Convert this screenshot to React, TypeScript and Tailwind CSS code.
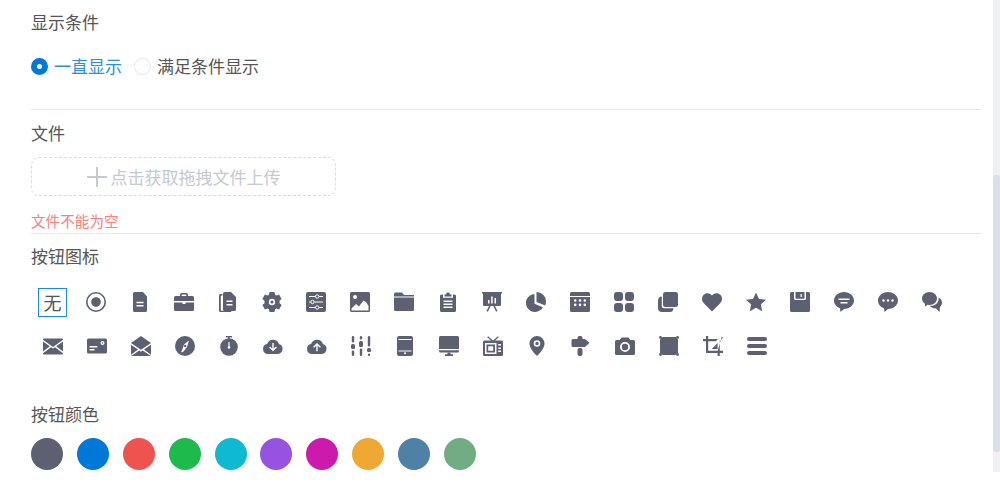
import type { ReactNode } from "react";

const Svg = ({ children }: { children: ReactNode }) => (
  <svg viewBox="0 0 20 20" className="h-5 w-5 fill-[#5c6070]" aria-hidden>
    {children}
  </svg>
);

const W = "#ffffff";

const topIcons: ReactNode[] = [
  <>
    <path fillRule="evenodd" d="M10 0a10 10 0 1 1 0 20 10 10 0 0 1 0-20Zm0 1.600a8.400 8.400 0 1 0 0 16.800 8.400 8.400 0 0 0 0-16.800Z" />
    <circle cx="10" cy="10" r="4.800" />
  </>,
  <>
    <path d="M3 1.500A1.500 1.500 0 0 1 4.500 0H13l4 4.500v14a1.500 1.500 0 0 1-1.500 1.500h-11A1.500 1.500 0 0 1 3 18.500Z" />
    <path fill={W} d="M6.500 9.800h7v1.500h-7ZM6.500 13h7v1.500h-7Z" />
  </>,
  <>
    <path d="M6 4V2.500A1.500 1.500 0 0 1 7.500 1h5A1.500 1.500 0 0 1 14 2.500V4h4.500A1.500 1.500 0 0 1 20 5.500V9H0V5.500A1.500 1.500 0 0 1 1.500 4Zm1.600 0h4.800V2.600H7.600ZM0 10.500h8.500V12h3v-1.500H20v7a1.500 1.500 0 0 1-1.500 1.500h-17A1.500 1.500 0 0 1 0 17.500Z" />
  </>,
  <>
    <path d="M4.500 2v1.500H3.600a.8.800 0 0 0-.8.800V18c0 .4.300.7.700.7h9.700V20H2.500A1.500 1.500 0 0 1 1 18.500v-15A1.500 1.500 0 0 1 2.500 2Z" />
    <path fillRule="evenodd" d="M6.500 0H13l5 5v12.500a1.500 1.500 0 0 1-1.500 1.500h-10A1.500 1.500 0 0 1 5 17.500v-16A1.500 1.500 0 0 1 6.500 0Zm2 8.500V10h6V8.500Zm0 3.500v1.500h6V12Z" />
  </>,
  <>
    <path
      fillRule="evenodd"
      d="M7.500 0h5l.6 2.800 1.300.7 2.700-.9 2.500 4.300-2.100 1.900v2.400l2.100 1.900-2.500 4.300-2.700-.9-1.300.7-.6 2.800h-5l-.6-2.800-1.300-.7-2.700.9-2.500-4.300L2.500 11.200V8.800L.4 6.900l2.500-4.300 2.700.9 1.300-.7ZM10 6.800a3.200 3.200 0 1 0 0 6.400 3.200 3.200 0 0 0 0-6.400Zm0 1.700a1.500 1.500 0 1 1 0 3 1.500 1.500 0 0 1 0-3Z"
    />
  </>,
  <>
    <rect width="20" height="20" rx="2" />
    <path fill={W} d="M3 4h6.500v1H3ZM13 4h4v1h-4ZM3 9.500h1.500v1H3ZM8.500 9.500H17v1H8.500ZM3 15h6.500v1H3ZM13 15h4v1h-4Z" />
    <circle cx="11.200" cy="4.500" r="1.700" fill="none" stroke={W} />
    <circle cx="6.500" cy="10" r="1.700" fill="none" stroke={W} />
    <circle cx="11.200" cy="15.500" r="1.700" fill="none" stroke={W} />
  </>,
  <>
    <rect width="20" height="20" rx="1.500" />
    <circle cx="5" cy="5" r="2" fill={W} />
    <path fill={W} d="M1.500 18.500v-2l4.500-4.500 3 2.500 4.500-6 2.500 1.500 2.500 4v4.500Z" />
  </>,
  <>
    <path d="M0 2a1.500 1.500 0 0 1 1.500-1.500H8L10 3H20v1.500H0ZM0 5.500h20v12a1.500 1.500 0 0 1-1.500 1.500h-17A1.500 1.500 0 0 1 0 17.500Z" />
  </>,
  <>
    <path d="M6.500 2.500H8A2 2 0 0 1 12 2.500h1.500v2h-7Z" />
    <path fillRule="evenodd" d="M5 2.500v3.200h10V2.500h1.500A1.500 1.500 0 0 1 18 4v14.500a1.500 1.500 0 0 1-1.500 1.500h-13A1.500 1.500 0 0 1 2 18.500V4a1.500 1.500 0 0 1 1.500-1.500ZM5.500 8.500V10h9V8.500Zm0 3V13h9v-1.500Zm0 3V16h9v-1.500Z" />
  </>,
  <>
    <path d="M0 0h20v1.500h-1V13a1 1 0 0 1-1 1h-5l2.500 5-1.400.7L11.300 14H8.700l-2.800 5.700L4.500 19 7 14H2a1 1 0 0 1-1-1V1.500H0Z" />
    <path fill={W} d="M6 8h1.500v3.500H6ZM9.200 4.500h1.500v7H9.200ZM12.500 6h1.500v5.500h-1.500Z" />
  </>,
  <>
    <path d="M8.500 2v9.800l8.400 3.400A9 9 0 1 1 8.500 2Z" />
    <path d="M10.500 0a9.500 9.500 0 0 1 9.500 9.500c0 1.400-.3 2.800-.8 4l-8.700-3.500Z" />
  </>,
  <>
    <path d="M1.500 0h17A1.500 1.500 0 0 1 20 1.500V4H0V1.500A1.500 1.500 0 0 1 1.500 0Z" />
    <path fillRule="evenodd" d="M0 5h20v13.500a1.500 1.500 0 0 1-1.500 1.500h-17A1.500 1.500 0 0 1 0 18.500Zm5.200 2.200a1.300 1.300 0 1 0 0 2.600 1.300 1.300 0 0 0 0-2.600Zm4.800 0a1.300 1.300 0 1 0 0 2.600 1.300 1.300 0 0 0 0-2.600Zm4.800 0a1.300 1.300 0 1 0 0 2.600 1.300 1.300 0 0 0 0-2.600ZM5.200 11.600a1.300 1.300 0 1 0 0 2.600 1.300 1.300 0 0 0 0-2.600Zm4.800 0a1.300 1.300 0 1 0 0 2.600 1.300 1.300 0 0 0 0-2.600Zm4.800 0a1.300 1.300 0 1 0 0 2.600 1.300 1.300 0 0 0 0-2.600Z" />
  </>,
  <>
    <rect width="9" height="9" rx="3" />
    <rect x="11" width="9" height="9" rx="3" />
    <rect y="11" width="9" height="9" rx="3" />
    <rect x="11" y="11" width="9" height="9" rx="3" />
  </>,
  <>
    <rect x="5" width="15" height="15" rx="2.500" />
    <path d="M3.800 4.500v9.700a2 2 0 0 0 2 2h9.700A4 4 0 0 1 12 20H4a4 4 0 0 1-4-4V8a4 4 0 0 1 3.800-3.500Z" />
  </>,
  <path d="M10 19.500 2 11.500C-.5 9-.6 5.200 1.500 3 3.800.7 7.500.8 10 3.500 12.500.8 16.200.7 18.500 3c2.100 2.200 2 6-.5 8.500Z" />,
  <path d="m10 .5 3 6.400 7 .8-5.200 4.700 1.400 6.900-6.200-3.500-6.200 3.500 1.400-6.900L0 7.700l7-.8Z" />,
  <>
    <path fillRule="evenodd" d="M1.500 0H4v6.500A1.500 1.500 0 0 0 5.500 8h9A1.500 1.500 0 0 0 16 6.500V0h2.500A1.500 1.500 0 0 1 20 1.500v17a1.500 1.500 0 0 1-1.500 1.500h-17A1.500 1.500 0 0 1 0 18.500v-17A1.500 1.500 0 0 1 1.500 0Z" />
    <path fillRule="evenodd" d="M5.500 0h9v6a.8.800 0 0 1-.8.800H6.300A.8.800 0 0 1 5.500 6Zm5 2v3h1.300V2Z" />
  </>,
  <>
    <path d="M10 0c5.500 0 10 3.700 10 8.500S15.500 17 10 17l-3.500 3-.5-3.700C2.400 15 0 12 0 8.500 0 3.700 4.500 0 10 0Z" />
    <path fill={W} d="M4.500 6.500h11V8h-11ZM6.500 10h7v1.500h-7Z" />
  </>,
  <>
    <path d="M10 0c5.500 0 10 3.700 10 8.500S15.500 17 10 17l-3.500 3-.5-3.700C2.400 15 0 12 0 8.500 0 3.700 4.500 0 10 0Z" />
    <circle cx="5.500" cy="8.500" r="1.200" fill={W} />
    <circle cx="10" cy="8.500" r="1.200" fill={W} />
    <circle cx="14.500" cy="8.500" r="1.200" fill={W} />
  </>,
  <>
    <path d="M7.500 0C11.600 0 15 2.900 15 6.500S11.600 13 7.500 13c-.7 0-1.300 0-2-.2L3 14.800v-3.100C1.200 10.500 0 8.600 0 6.500 0 2.900 3.400 0 7.500 0Z" />
    <path d="M16.500 5.500c2.100 1 3.500 2.900 3.500 5 0 1.800-1 3.400-2 4.500l-.5 5-3.500-3.500c-2.700 0-5-1-6.300-2.700 5.300.6 9.600-3 8.800-8.300Z" />
  </>,
];

const bottomIcons: ReactNode[] = [
  <path d="M0 3.500A1 1 0 0 1 1 2.500h18a1 1 0 0 1 1 1v.3L10 11 0 3.800Zm0 2L6.800 10.300 0 15.500Zm20 0v10l-6.800-5.200ZM8 11.200l2 1.400 2-1.400 8 6.100v.2a1 1 0 0 1-1 1H1a1 1 0 0 1-1-1v-.2Z" />,
  <path
    fillRule="evenodd"
    d="M1.500 2.500h17A1.500 1.500 0 0 1 20 4v12a1.500 1.500 0 0 1-1.500 1.500h-17A1.500 1.500 0 0 1 0 16V4a1.500 1.500 0 0 1 1.500-1.500ZM15.500 5a2 2 0 1 0 0 4 2 2 0 0 0 0-4Zm0 1.300a.7.700 0 1 1 0 1.400.7.700 0 0 1 0-1.400ZM2.500 10v1.500h8V10Zm0 3v1.500h5V13Z"
  />,
  <>
    <path d="M10 0l10 7L10 13.700 0 7Z" />
    <path d="M0 8.800 7 13.500 0 18.800ZM20 8.800v10l-7-5.300ZM8.300 14.500 10 15.700l1.700-1.200 8.300 5.500H0Z" />
  </>,
  <>
    <circle cx="10" cy="10" r="10" />
    <path fill={W} d="M14 4.500 12 11l-3.500 4.500L7 16.500l-.8-.8 1-2L9 8.500Z" />
    <circle cx="10.200" cy="10" r="1.200" />
  </>,
  <>
    <path d="M7 0h6v1.400H7Z" />
    <circle cx="10" cy="11" r="8.800" />
    <path d="M9.200 1h1.600v2h-1.600Z" />
    <path fill={W} d="M9.400 6h1.200v4.200a1.300 1.300 0 1 1-1.200 0Z" />
  </>,
  <>
    <path d="M5 18a5 5 0 0 1-.9-9.900 6.200 6.200 0 0 1 11.800-.2A5.200 5.200 0 0 1 15 18Z" />
    <path fill={W} d="M9.300 7h1.400v5.600l2.200-2.100 1 1L10 15.300 6.100 11.500l1-1 2.200 2.100Z" />
  </>,
  <>
    <path d="M5 18a5 5 0 0 1-.9-9.900 6.200 6.200 0 0 1 11.800-.2A5.200 5.200 0 0 1 15 18Z" />
    <path fill={W} d="M9.300 15.300h1.400V9.700l2.200 2.100 1-1L10 7 6.100 10.800l1 1 2.200-2.100Z" />
  </>,
  <>
    <rect x=".8" width="2.400" height="6.500" rx="1.200" />
    <rect y="8" width="4" height="5" rx="1.500" />
    <rect x=".8" y="14.500" width="2.400" height="5.500" rx="1.200" />
    <rect x="8.800" width="2.400" height="3.500" rx="1.200" />
    <rect x="8" y="5" width="4" height="6" rx="1.500" />
    <rect x="8.800" y="12.500" width="2.400" height="7.500" rx="1.200" />
    <rect x="16.800" width="2.400" height="10.500" rx="1.200" />
    <rect x="16" y="12" width="4" height="4" rx="1.500" />
    <rect x="16.800" y="17.500" width="2.400" height="2.500" rx="1.200" />
  </>,
  <path
    fillRule="evenodd"
    d="M4 0h12a2 2 0 0 1 2 2v16a2 2 0 0 1-2 2H4a2 2 0 0 1-2-2V2a2 2 0 0 1 2-2Zm-.5 3v1h13V3Zm0 11.500v1h13v-1ZM10 16.300a1 1 0 1 0 0 2 1 1 0 0 0 0-2Z"
  />,
  <>
    <path d="M1.500 0h17A1.500 1.500 0 0 1 20 1.500V13H0V1.500A1.500 1.500 0 0 1 1.500 0ZM0 14.200h20v.8a1.500 1.500 0 0 1-1.500 1.500h-17A1.500 1.500 0 0 1 0 15Z" />
    <path d="M8.500 16.500h3v1.800H14V20H6v-1.700h2.500Z" />
  </>,
  <>
    <path d="M5 .3 10 4.500 15 .3l.8.9L12 4.500h6.500A1.500 1.500 0 0 1 20 6v12.500a1.500 1.500 0 0 1-1.500 1.500h-17A1.500 1.500 0 0 1 0 18.500V6a1.500 1.500 0 0 1 1.500-1.500H8L4.200 1.200Z" />
    <path fill={W} d="M2 7h11.500v11H2Z" />
    <path d="M3.500 8.500h8.500v8H3.500Z" />
    <path fill={W} d="M5.200 10.200h5v4.600h-5ZM15.200 11.500H18V13h-2.800ZM15.200 14.500H18V16h-2.800ZM15.200 8H18v1.500h-2.800Z" />
  </>,
  <path
    fillRule="evenodd"
    d="M10 0a7.500 7.500 0 0 1 7.500 7.500c0 4.500-4.500 9.500-7.500 12.500-3-3-7.500-8-7.500-12.500A7.500 7.500 0 0 1 10 0Zm0 4.200a3.300 3.300 0 1 0 0 6.600 3.300 3.300 0 0 0 0-6.600Zm0 1.600a1.700 1.700 0 1 1 0 3.400 1.700 1.700 0 0 1 0-3.400Z"
  />,
  <>
    <rect x="6.500" width="5" height="4" rx="1.800" />
    <path d="M2 3h12l4.500 3.800L14 11H2a1.500 1.500 0 0 1-1.500-1.500v-5A1.500 1.500 0 0 1 2 3Z" />
    <rect x="6.500" y="12" width="5" height="8" rx="2" />
  </>,
  <path
    fillRule="evenodd"
    d="M6.500 1.500h7l1.800 2.500h3.200A1.500 1.500 0 0 1 20 5.500v12a1.500 1.500 0 0 1-1.500 1.500h-17A1.500 1.500 0 0 1 0 17.500v-12A1.500 1.500 0 0 1 1.500 4h3.200ZM10 6a5 5 0 1 0 0 10 5 5 0 0 0 0-10Zm0 1.800a3.200 3.200 0 1 1 0 6.400 3.200 3.200 0 0 1 0-6.400Z"
  />,
  <>
    <path d="M3.500 1h13l2.500 2.500v13L16.500 19h-13L1 16.500v-13Z" />
    <circle cx="1.500" cy="1.500" r="1.400" />
    <circle cx="18.500" cy="1.500" r="1.400" />
    <circle cx="1.500" cy="18.500" r="1.400" />
    <circle cx="18.500" cy="18.500" r="1.400" />
  </>,
  <path d="M3 0h2.200v14.800h9.500L18.800.6l1.200 1.200-3.200 3.300v9.700H20v2.200h-3.200V20h-2.200v-2.900H3V5.200H0V3h3Zm2.200 2.200v.8h9.700l-2 2.200H5.200Zm9.400 4.700v6.100H8.700Z" />,
  <>
    <rect y="1" width="20" height="4" rx="2" />
    <rect y="8" width="20" height="4" rx="2" />
    <rect y="15" width="20" height="4" rx="2" />
  </>,
];

const swatches = [
  "bg-[#5c6070]",
  "bg-[#0078d8]",
  "bg-[#ef5350]",
  "bg-[#1fba4c]",
  "bg-[#0fb9d0]",
  "bg-[#9553e0]",
  "bg-[#cc1bac]",
  "bg-[#eea833]",
  "bg-[#4f80a6]",
  "bg-[#72ac82]",
];

function IconRow({ children }: { children: ReactNode }) {
  return <div className="flex h-[44px]">{children}</div>;
}

function IconCell({ icon }: { icon: ReactNode }) {
  return (
    <div className="flex h-[44px] w-[44px] items-center justify-center">
      <Svg>{icon}</Svg>
    </div>
  );
}

export default function App() {
  return (
    <div className="flex h-[490px] w-[1000px] overflow-hidden bg-white font-['Noto_Sans_CJK_SC','Liberation_Sans',sans-serif] text-[17px] text-[#555]">
      <main className="w-[993px] pl-[31px] pr-[12px]">
        <div className="flex h-[43px] items-center">显示条件</div>

        <div className="flex h-[46px] items-center">
          <span className="flex h-[17px] w-[17px] items-center justify-center rounded-full bg-[#0078d8]">
            <span className="h-[5px] w-[5px] rounded-full bg-white" />
          </span>
          <span className="ml-[6px] text-[#2b8fe0]">一直显示</span>
          <span className="ml-[12px] h-[17px] w-[17px] rounded-full border border-[#e4e6ee] bg-white" />
          <span className="ml-[6px]">满足条件显示</span>
        </div>

        <div className="mt-[20px] border-t border-[#e8e9ee]">
          <div className="mb-[2px] flex h-[45px] items-center">文件</div>
          <div className="flex h-[39px] w-[305px] items-center justify-center rounded-[8px] border border-dashed border-[#d8dbe2] text-[#c4c9d2]">
            <svg viewBox="0 0 20 20" className="mr-[4px] h-5 w-5 fill-[#c4c9d2]" aria-hidden>
              <path d="M9 0h2v9h9v2h-9v9H9v-9H0V9h9Z" />
            </svg>
            点击获取拖拽文件上传
          </div>
          <div className="mt-[15px] text-[14.6px] leading-[20px] text-[#f87f7f]">文件不能为空</div>
        </div>

        <div className="mt-[2px] border-t border-[#e8e9ee]">
          <div className="mb-[3px] flex h-[43px] items-center">按钮图标</div>
          <IconRow>
            <div className="mx-[7px] flex h-[29px] w-[29px] shrink-0 items-center justify-center self-center border border-[#1a8ae5] text-[18px]">
              无
            </div>
            <div className="-ml-[0.500px] flex">
              {topIcons.map((icon, i) => (
                <IconCell key={i} icon={icon} />
              ))}
            </div>
          </IconRow>
          <IconRow>
            {bottomIcons.map((icon, i) => (
              <IconCell key={i} icon={icon} />
            ))}
          </IconRow>
        </div>

        <div className="mb-[2px] mt-[24px] flex h-[44px] items-center">按钮颜色</div>
        <div className="flex gap-[13.9px]">
          {swatches.map((color) => (
            <span key={color} className={`h-[32px] w-[32px] rounded-full ${color}`} />
          ))}
        </div>
      </main>

      <div className="h-[472px] w-[7px] shrink-0 bg-[#eef0f5] pt-[175px]">
        <div className="h-[277px] rounded-[3px] bg-[#dae0ea]" />
      </div>
    </div>
  );
}
